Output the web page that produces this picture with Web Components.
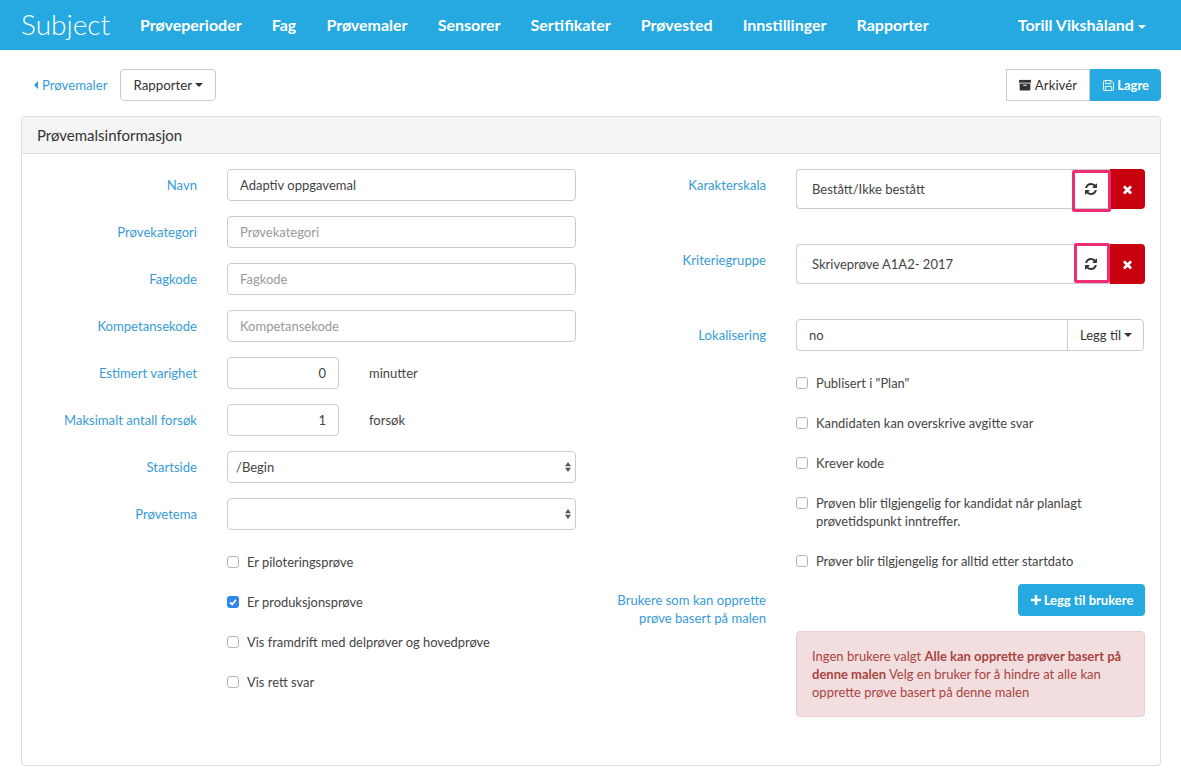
<!DOCTYPE html>
<html lang="no">
<head>
<meta charset="utf-8">
<title>Subject</title>
<style>
    html, body { margin: 0; padding: 0; background: #fff; }
    body { font: 400 13px/18px Lato, "Open Sans", sans-serif; color: #333; }
</style>
</head>
<body>
<app-nav>
    <nav-link>Prøveperioder</nav-link>
    <nav-link>Fag</nav-link>
    <nav-link>Prøvemaler</nav-link>
    <nav-link>Sensorer</nav-link>
    <nav-link>Sertifikater</nav-link>
    <nav-link>Prøvested</nav-link>
    <nav-link>Innstillinger</nav-link>
    <nav-link>Rapporter</nav-link>
    <nav-link slot="user" caret>Torill Vikshåland</nav-link>
</app-nav>

<page-toolbar>
    <back-link>Prøvemaler</back-link>
    <ui-button caret>Rapporter</ui-button>
    <button-group slot="end">
        <ui-button icon="archive" attached="left">Arkivér</ui-button>
        <ui-button icon="save" variant="primary" attached="right">Lagre</ui-button>
    </button-group>
</page-toolbar>

<info-panel heading="Prøvemalsinformasjon">
    <form-column slot="left" label-width="175">
        <form-row label="Navn"><text-field value="Adaptiv oppgavemal"></text-field></form-row>
        <form-row label="Prøvekategori"><text-field placeholder="Prøvekategori"></text-field></form-row>
        <form-row label="Fagkode"><text-field placeholder="Fagkode"></text-field></form-row>
        <form-row label="Kompetansekode"><text-field placeholder="Kompetansekode"></text-field></form-row>
        <form-row label="Estimert varighet"><number-field value="0" unit="minutter"></number-field></form-row>
        <form-row label="Maksimalt antall forsøk"><number-field value="1" unit="forsøk"></number-field></form-row>
        <form-row label="Startside"><select-field value="/Begin"></select-field></form-row>
        <form-row label="Prøvetema"><select-field></select-field></form-row>
        <form-row gap="22"><check-row>Er piloteringsprøve</check-row></form-row>
        <form-row gap="20"><check-row checked>Er produksjonsprøve</check-row></form-row>
        <form-row gap="20"><check-row>Vis framdrift med delprøver og hovedprøve</check-row></form-row>
        <form-row gap="20"><check-row>Vis rett svar</check-row></form-row>
    </form-column>

    <form-column slot="right" label-width="160">
        <form-row label="Karakterskala"><picker-field value="Bestått/Ikke bestått" mark-left="1072" mark-width="39" mark-top="1" mark-height="42"></picker-field></form-row>
        <form-row label="Kriteriegruppe" gap="35"><picker-field value="Skriveprøve A1A2- 2017" mark-left="1074" mark-width="36" mark-top="-1" mark-height="40"></picker-field></form-row>
        <form-row label="Lokalisering" gap="35"><locale-field value="no"></locale-field></form-row>
        <form-row gap="22"><check-row>Publisert i "Plan"</check-row></form-row>
        <form-row gap="20"><check-row>Kandidaten kan overskrive avgitte svar</check-row></form-row>
        <form-row gap="20"><check-row>Krever kode</check-row></form-row>
        <form-row gap="20"><check-row>Prøven blir tilgjengelig for kandidat når planlagt prøvetidspunkt inntreffer.</check-row></form-row>
        <form-row gap="20"><check-row>Prøver blir tilgjengelig for alltid etter startdato</check-row></form-row>
        <form-row label="Brukere som kan opprette prøve basert på malen" gap="13">
            <add-users>Legg til brukere</add-users>
            <alert-box>Ingen brukere valgt <b>Alle kan opprette prøver basert på</b><br><b>denne malen</b> Velg en bruker for å hindre at alle kan<br>opprette prøve basert på denne malen</alert-box>
        </form-row>
    </form-column>
</info-panel>

<script>
const ICONS = {
    refresh: '<svg viewBox="0 0 1792 1792" width="14" height="14" fill="currentColor"><path d="M1639 1056q0 5-1 7-64 268-268 434.500t-478 166.500q-146 0-282.500-55t-243.500-157l-129 129q-19 19-45 19t-45-19-19-45v-448q0-26 19-45t45-19h448q26 0 45 19t19 45-19 45l-137 137q71 66 161 102t187 36q134 0 250-65t186-179q11-17 53-117 8-23 30-23h192q13 0 22.500 9.500t9.500 22.500zm25-800v448q0 26-19 45t-45 19h-448q-26 0-45-19t-19-45 19-45l138-138q-148-137-349-137-134 0-250 65t-186 179q-11 17-53 117-8 23-30 23h-199q-13 0-22.500-9.500t-9.500-22.500v-7q65-268 270-434.500t480-166.500q146 0 284 55.500t245 156.500l130-129q19-19 45-19t45 19 19 45z"/></svg>',
    close: '<svg viewBox="0 0 1792 1792" width="13" height="13" fill="currentColor"><path d="M1490 1322q0 40-28 68l-136 136q-28 28-68 28t-68-28l-294-294-294 294q-28 28-68 28t-68-28l-136-136q-28-28-28-68t28-68l294-294-294-294q-28-28-28-68t28-68l136-136q28-28 68-28t68 28l294 294 294-294q28-28 68-28t68 28l136 136q28 28 28 68t-28 68l-294 294 294 294q28 28 28 68z"/></svg>',
    archive: '<svg viewBox="0 0 13 12" width="12" height="12" fill="currentColor"><path d="M0 0.500h13v3H0z"/><path d="M0.700 4.300h11.600V11a1 1 0 0 1-1 1H1.700a1 1 0 0 1-1-1zM4.700 5.700v1.100h3.600V5.700z" fill-rule="evenodd"/></svg>',
    save: '<svg viewBox="0 0 12 12" width="11" height="11" fill="none" stroke="currentColor" stroke-width="1"><path d="M1.500.5h7.300l2.700 2.700v7.300a1 1 0 0 1-1 1h-9a1 1 0 0 1-1-1v-9a1 1 0 0 1 1-1z"/><path d="M3 .5v3.500h5.500V.5M2.500 11.500V7h7v4.500"/></svg>',
    plus: '<svg viewBox="0 0 12 12" width="10" height="10" fill="currentColor"><path d="M4.500 0h3v4.500H12v3H7.500V12h-3V7.500H0v-3h4.500z"/></svg>'
};

const CARET = '<span class="caret"></span>';
const CARET_CSS = `.caret { display: inline-block; width: 0; height: 0; margin-left: 4px; vertical-align: middle;
    border-top: 4px solid currentColor; border-left: 4px solid transparent; border-right: 4px solid transparent; }`;
const BOX_CSS = `box-sizing: border-box; background: #fff; border: 1px solid #ccc; border-radius: 4px;
    font-size: 13px; line-height: 18px; color: #444;`;

// small base class, every element just declares its html
class ShadowElement extends HTMLElement {
    constructor() {
        super();
        this.attachShadow({ mode: 'open' });
    }

    connectedCallback() {
        this.shadowRoot.innerHTML = this.render();
    }
}

class AppNav extends ShadowElement {
    render() {
        return `
            <style>
                :host { display: flex; align-items: center; height: 50px; background: #25a9e0; color: #fff; padding: 0 20px 0 21px; }
                .brand { font-size: 28px; font-weight: 300; line-height: 49px; width: 104px; padding-bottom: 1px; }
                .links { display: flex; flex: 1; }
            </style>
            <div class="brand">Subject</div>
            <div class="links"><slot></slot></div>
            <slot name="user"></slot>
        `;
    }
}

class NavLink extends ShadowElement {
    render() {
        return `
            <style>
                :host { display: block; padding: 0 15.050px 1px; font-size: 16px; font-weight: 700; line-height: 49px; color: #fff; }
                ${CARET_CSS}
            </style>
            <slot></slot>${this.hasAttribute('caret') ? CARET : ''}
        `;
    }
}

class PageToolbar extends ShadowElement {
    render() {
        return `
            <style>
                :host { display: flex; align-items: center; gap: 13px; padding: 19px 20px 15px 34px; }
                .end { margin-left: auto; }
            </style>
            <slot></slot>
            <div class="end"><slot name="end"></slot></div>
        `;
    }
}

class BackLink extends ShadowElement {
    render() {
        return `
            <style>
                :host { display: inline-flex; align-items: center; color: #379cd6; font-size: 13.2px; }
                i { width: 0; height: 0; margin-right: 4px; border-right: 4px solid currentColor;
                    border-top: 4px solid transparent; border-bottom: 4px solid transparent; }
            </style>
            <i></i><slot></slot>
        `;
    }
}

class ButtonGroup extends ShadowElement {
    render() {
        return `<style>:host { display: flex; }</style><slot></slot>`;
    }
}

class UiButton extends ShadowElement {
    render() {
        const icon = this.getAttribute('icon');
        const primary = this.getAttribute('variant') === 'primary';
        const attached = this.getAttribute('attached');
        let radius = '4px';
        if (attached === 'left') radius = '0';
        if (attached === 'right') radius = '0 4px 4px 0';
        return `
            <style>
                :host { display: inline-flex; align-items: center; gap: ${primary ? 3 : 4}px; height: 32px; padding: 0 ${primary ? 11 : 12}px 0 12px; box-sizing: border-box;
                    border: 1px solid ${primary ? '#25a9e0' : '#ccc'}; border-radius: ${radius};
                    background: ${primary ? '#25a9e0' : '#fff'}; color: ${primary ? '#fff' : '#333'};
                    font-size: ${primary ? 13 : 13.3}px; font-weight: ${primary ? 700 : 400}; }
                svg { display: block; }
                ${CARET_CSS}
                .caret { margin-left: -1px; }
            </style>
            ${icon ? ICONS[icon] : ''}<slot></slot>${this.hasAttribute('caret') ? CARET : ''}
        `;
    }
}

class InfoPanel extends ShadowElement {
    render() {
        return `
            <style>
                :host { display: block; margin: 0 20px 0 21px; border: 1px solid #ddd; border-radius: 4px; box-sizing: border-box; }
                h2 { margin: 0; height: 37px; box-sizing: border-box; padding: 0 15px; background: #f5f5f5;
                    border-bottom: 1px solid #ddd; border-radius: 3px 3px 0 0;
                    font-size: 15px; font-weight: 400; line-height: 37px; color: #333; }
                .body { display: grid; grid-template-columns: 554px 1fr; column-gap: 30px; padding: 15px 15px 48px 0; }
            </style>
            <h2>${this.getAttribute('heading')}</h2>
            <div class="body">
                <slot name="left"></slot>
                <slot name="right"></slot>
            </div>
        `;
    }
}

class FormColumn extends ShadowElement {
    render() {
        return `
            <style>
                :host { display: flex; flex-direction: column; --label-width: ${this.getAttribute('label-width')}px; }
            </style>
            <slot></slot>
        `;
    }
}

class FormRow extends ShadowElement {
    render() {
        const gap = this.getAttribute('gap');
        const label = this.getAttribute('label') || '';
        return `
            <style>
                :host { display: grid; grid-template-columns: var(--label-width) 1fr; column-gap: 30px; }
                :host(:not(:first-child)) { margin-top: ${gap === null ? 15 : gap}px; }
                label { display: block; padding-top: 7px; text-align: right; color: #379cd6; font-size: 13.100px; line-height: 18px; }
                .control { min-width: 0; }
            </style>
            <label>${label}</label>
            <div class="control"><slot></slot></div>
        `;
    }
}

class TextField extends ShadowElement {
    render() {
        const value = this.getAttribute('value');
        const placeholder = this.getAttribute('placeholder');
        return `
            <style>
                :host { display: block; height: 32px; padding: 6px 12px; ${BOX_CSS} }
                .ph { color: #999; }
            </style>
            ${value ? value : `<span class="ph">${placeholder}</span>`}
        `;
    }
}

class NumberField extends ShadowElement {
    render() {
        return `
            <style>
                :host { display: flex; align-items: center; gap: 30px; }
                .box { width: 112px; height: 32px; padding: 6px 12px; text-align: right; ${BOX_CSS} }
                .unit { font-size: 13px; color: #444; }
            </style>
            <div class="box">${this.getAttribute('value')}</div>
            <span class="unit">${this.getAttribute('unit')}</span>
        `;
    }
}

class SelectField extends ShadowElement {
    render() {
        return `
            <style>
                :host { display: flex; align-items: center; justify-content: space-between; height: 32px; padding: 0 4px 0 8px; ${BOX_CSS} }
                svg { display: block; }
            </style>
            <span>${this.getAttribute('value') || ''}</span>
            <svg viewBox="0 0 7 12" width="6" height="10" fill="#555"><path d="M3.500 0L7 5H0zM3.500 12L0 7h7z"/></svg>
        `;
    }
}

class PickerField extends ShadowElement {
    render() {
        const a = name => this.getAttribute(name);
        // the pink frame is a marking drawn over the button in the screenshot
        return `
            <style>
                :host { display: flex; position: relative; height: 40px; }
                .value { flex: 1; padding: 10px 15px; ${BOX_CSS} border-right: 0; border-radius: 4px 0 0 4px; }
                .refresh, .remove { display: flex; align-items: center; justify-content: center; box-sizing: border-box; width: 35px; }
                .refresh { width: 39px; background: #fff; border: 1px solid #ccc; border-width: 1px 0; color: #333; }
                .remove { background: #c9000e; color: #fff; border-radius: 0 4px 4px 0; }
                .mark { position: absolute; box-sizing: border-box; border: 3px solid #ee2e72; border-radius: 2px;
                    left: ${a('mark-left') - 796}px; width: ${a('mark-width')}px; top: ${a('mark-top')}px; height: ${a('mark-height')}px; }
            </style>
            <div class="value">${a('value')}</div>
            <div class="refresh">${ICONS.refresh}</div>
            <div class="remove">${ICONS.close}</div>
            <div class="mark"></div>
        `;
    }
}

class LocaleField extends ShadowElement {
    render() {
        return `
            <style>
                :host { display: flex; height: 32px; width: 348px; }
                .value { flex: 1; padding: 6px 12px; ${BOX_CSS} border-radius: 4px 0 0 4px; }
                .add { display: flex; align-items: center; gap: 3px; padding: 0 11px 0 12px; margin-left: -1px; ${BOX_CSS} color: #333; border-radius: 0 4px 4px 0; }
                ${CARET_CSS}
                .caret { margin-left: 0; }
            </style>
            <div class="value">${this.getAttribute('value')}</div>
            <div class="add">Legg til${CARET}</div>
        `;
    }
}

class CheckRow extends ShadowElement {
    render() {
        const checked = this.hasAttribute('checked');
        const tick = '<svg viewBox="0 0 12 12" width="12" height="12" fill="none" stroke="#fff" stroke-width="1.800"><path d="M3 6.300l2.200 2.200L9 3.800"/></svg>';
        return `
            <style>
                :host { display: grid; grid-template-columns: 12px 1fr; column-gap: 8px; padding: 1px 0; font-size: 12.900px; line-height: 18px; color: #444; }
                .box { box-sizing: border-box; width: 12px; height: 12px; margin-top: 3px; border-radius: 3px; overflow: hidden;
                    border: ${checked ? '0' : '1px solid #b5b5b5'}; background: ${checked ? '#2f86ec' : '#fff'}; }
                svg { display: block; }
            </style>
            <div class="box">${checked ? tick : ''}</div>
            <div><slot></slot></div>
        `;
    }
}

class AddUsers extends ShadowElement {
    render() {
        return `
            <style>
                :host { display: flex; align-items: center; justify-content: center; gap: 3px; width: 127px; height: 32px; margin-left: auto;
                    box-sizing: border-box; padding-left: 1px;
                    background: #25a9e0; color: #fff; border-radius: 4px; font-size: 13px; font-weight: 700; }
                svg { display: block; }
            </style>
            ${ICONS.plus}<slot></slot>
        `;
    }
}

class AlertBox extends ShadowElement {
    render() {
        return `
            <style>
                :host { display: block; margin-top: 15px; padding: 15px; box-sizing: border-box; background: #f2dede;
                    border: 1px solid #ebccd1; border-radius: 4px; color: #a94442; font-size: 13px; line-height: 18px; }
            </style>
            <slot></slot>
        `;
    }
}

customElements.define('app-nav', AppNav);
customElements.define('nav-link', NavLink);
customElements.define('page-toolbar', PageToolbar);
customElements.define('back-link', BackLink);
customElements.define('button-group', ButtonGroup);
customElements.define('ui-button', UiButton);
customElements.define('info-panel', InfoPanel);
customElements.define('form-column', FormColumn);
customElements.define('form-row', FormRow);
customElements.define('text-field', TextField);
customElements.define('number-field', NumberField);
customElements.define('select-field', SelectField);
customElements.define('picker-field', PickerField);
customElements.define('locale-field', LocaleField);
customElements.define('check-row', CheckRow);
customElements.define('add-users', AddUsers);
customElements.define('alert-box', AlertBox);
</script>
</body>
</html>
